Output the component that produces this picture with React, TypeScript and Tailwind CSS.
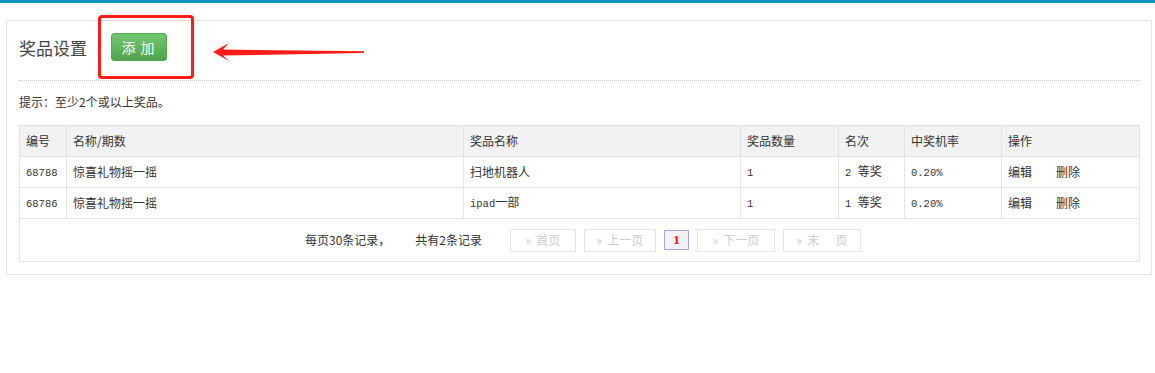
import React from "react";

const cjk = { fontFamily: '"Noto Sans CJK SC", "Liberation Sans", sans-serif' };

const rows = [
  { id: "68788", name: "惊喜礼物摇一摇", prize: "扫地机器人", latin: false, count: "1", rank: "2" },
  { id: "68786", name: "惊喜礼物摇一摇", prize: "ipad", latin: true, count: "1", rank: "1" },
];

const Mono = ({ children }: { children: React.ReactNode }) => (
  <span className="font-['Liberation_Mono',monospace] text-[10.5px]">{children}</span>
);

const PageBtn = ({ label }: { label: string }) => (
  <span className="flex h-[23px] items-center justify-center border border-[#e6e6e6] px-2 text-[12px] text-[#cccccc] whitespace-pre">
    <span className="mr-[5px] text-[12px]">»</span>
    {label}
  </span>
);

const cell = "border border-[#e3e3e3] px-[6px] text-left align-middle font-normal";

export default function App() {
  return (
    <div className="relative h-[373px] w-[1155px] overflow-hidden bg-white text-[12px] text-[#333]" style={cjk}>
      <div className="h-[3px] bg-[#0c95bf]" />

      <div className="ml-[6px] mt-[17px] w-[1146px] border border-[#e3e3e3] px-3 pb-3 pt-3">
        <div className="h-[48px] border-b border-dotted border-[#c8c8c8]">
          <div className="flex h-[28px] items-center">
            <h2 className="w-[92px] text-[17px] font-normal leading-none text-[#444]">奖品设置</h2>
            <button className="h-[28px] w-[56px] rounded-[3px] border border-[#55a853] bg-gradient-to-b from-[#72c870] to-[#4fa34e] text-[14px] tracking-[5px] pl-[3px] text-white">
              添加
            </button>
          </div>
        </div>

        <p className="mt-[11px] leading-[20px]">提示：至少2个或以上奖品。</p>

        <table className="mt-[13px] w-[1120px] table-fixed border-collapse">
          <colgroup>
            <col className="w-[47px]" />
            <col className="w-[397px]" />
            <col className="w-[277px]" />
            <col className="w-[98px]" />
            <col className="w-[66px]" />
            <col className="w-[97px]" />
            <col className="w-[138px]" />
          </colgroup>
          <thead>
            <tr className="h-[31px] bg-[#f2f2f2]">
              {["编号", "名称/期数", "奖品名称", "奖品数量", "名次", "中奖机率", "操作"].map((h) => (
                <th key={h} className={cell}>
                  {h}
                </th>
              ))}
            </tr>
          </thead>
          <tbody>
            {rows.map((r) => (
              <tr key={r.id} className="h-[31px]">
                <td className={cell}>
                  <Mono>{r.id}</Mono>
                </td>
                <td className={cell}>{r.name}</td>
                <td className={cell}>
                  {r.latin ? (
                    <>
                      <Mono>{r.prize}</Mono>一部
                    </>
                  ) : (
                    r.prize
                  )}
                </td>
                <td className={cell}>
                  <Mono>{r.count}</Mono>
                </td>
                <td className={cell}>
                  <Mono>{r.rank} </Mono>等奖
                </td>
                <td className={cell}>
                  <Mono>0.20%</Mono>
                </td>
                <td className={cell}>
                  <span className="mr-[24px]">编辑</span>
                  <span>删除</span>
                </td>
              </tr>
            ))}
            <tr className="h-[43px]">
              <td colSpan={7} className="border border-[#e3e3e3]">
                <div className="flex items-center pl-[285px]">
                  <span>每页30条记录，</span>
                  <span className="ml-[25px]">共有2条记录</span>
                  <div className="ml-[28px] flex items-center gap-2">
                    <span className="w-[66px]"><PageBtn label="首页" /></span>
                    <span className="w-[72px]"><PageBtn label="上一页" /></span>
                    <span className="flex h-[20px] w-[25px] items-center justify-center border border-[#aaa3e0] bg-[#f3f3f3] font-['Liberation_Serif',serif] text-[13px] font-bold text-[#ff0000]">
                      1
                    </span>
                    <span className="w-[78px]"><PageBtn label="下一页" /></span>
                    <span className="w-[78px]"><PageBtn label="末      页" /></span>
                  </div>
                </div>
              </td>
            </tr>
          </tbody>
        </table>
      </div>

      {/* annotation overlay */}
      <div className="absolute left-[98px] top-[15px] h-[64px] w-[96px] rounded-[4px] border-[3px] border-[#fd1d16]" />
      <svg className="absolute left-[210px] top-[40px]" width="160" height="26" viewBox="210 40 160 26">
        <polygon points="213,52 229,43 223,49.5 364,51.3 364,53 223,55.5 229,61" fill="#fd1d16" />
      </svg>
    </div>
  );
}
